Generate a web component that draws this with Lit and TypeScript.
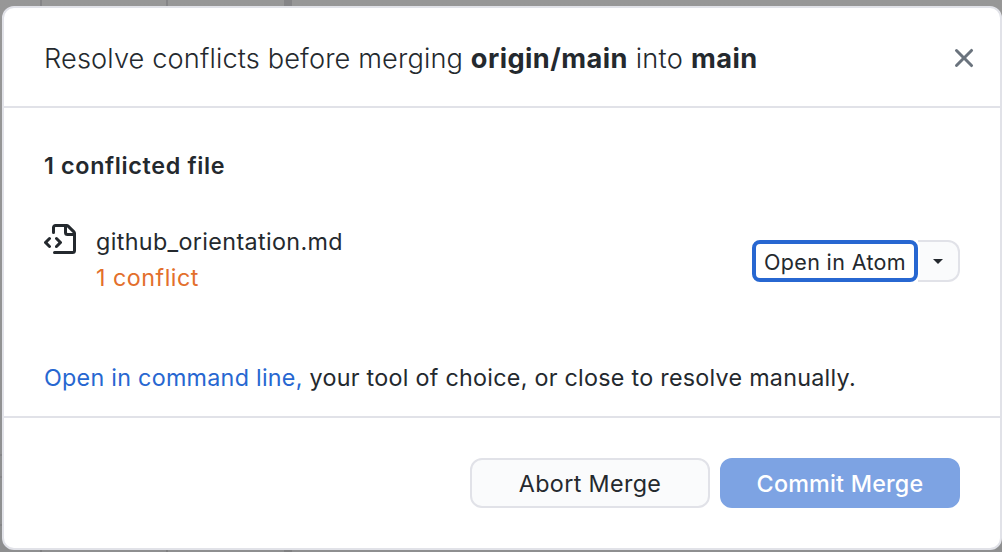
import { LitElement, html, css } from "lit";
import { customElement } from "lit/decorators.js";

@customElement("app-root")
export class AppRoot extends LitElement {
  static styles = css`
    :host {
      display: block;
      box-sizing: border-box;
      width: 1002px;
      height: 552px;
      padding: 6px 0 2px 2px;
      overflow: hidden;
      color: #24292e;
      font-family: Inter, "Liberation Sans", sans-serif;
      font-size: 23.3px;
      line-height: 36px;
      background:
        linear-gradient(#858587, #7f8081) 40px 0 / 2px 100% no-repeat,
        linear-gradient(#858587, #7f8081) 166px 0 / 2px 100% no-repeat,
        linear-gradient(#858587, #7f8081) 284px 0 / 8px 100% no-repeat,
        linear-gradient(#858587, #858587) 0 454px / 2px 2px no-repeat,
        linear-gradient(#858587, #858587) 0 476px / 2px 2px no-repeat,
        linear-gradient(#858587, #858587) 0 524px / 2px 2px no-repeat,
        linear-gradient(#979797, #8e8f90);
    }
    * { box-sizing: border-box; }
    .dialog {
      display: flex;
      flex-direction: column;
      width: 1000px;
      height: 544px;
      border: 2px solid #e1e2e8;
      border-radius: 12px;
      background: #fff;
      white-space: nowrap;
    }
    .header {
      display: flex;
      align-items: center;
      justify-content: space-between;
      height: 100px;
      padding: 2px 20px 0 40px;
      border-bottom: 2px solid #e1e2e8;
    }
    .title {
      margin: 0;
      padding-top: 1px;
      font-size: 27.2px;
      font-weight: 300;
      line-height: 40px;
      letter-spacing: 0.13px;
    }
    .title b { font-weight: 700; letter-spacing: 0.43px; }
    .title .joiner { letter-spacing: 0.27px; }
    .icon { display: block; fill: currentColor; }
    .close { color: #6a737d; }
    .body {
      height: 310px;
      padding: 40px;
      border-bottom: 2px solid #e1e2e8;
    }
    .count {
      margin: 0;
      font-size: 23.3px;
      font-weight: 600;
      letter-spacing: 0.67px;
    }
    .file {
      display: flex;
      align-items: flex-start;
      height: 72px;
      margin-top: 40px;
    }
    .file-icon { margin-right: 20px; }
    .details { flex: 1; }
    .name, .conflicts { height: 36px; }
    .name { letter-spacing: 0.36px; }
    .conflicts { color: #e36f2c; letter-spacing: 0.5px; }
    .open { display: flex; margin-top: 16px; }
    .open-main {
      display: flex;
      align-items: center;
      justify-content: center;
      width: 166px;
      height: 42px;
      padding-top: 2px;
      border: 4px solid #2767d1;
      border-radius: 8px;
      background: #fff;
      box-shadow: 0 0 0 2px #fff;
      font-size: 21.5px;
      letter-spacing: 0.36px;
      z-index: 1;
    }
    .open-more {
      display: flex;
      align-items: center;
      width: 42px;
      height: 42px;
      padding: 1px 0 0 15px;
      border: 2px solid #e1e2e8;
      border-left: 0;
      border-radius: 0 12px 12px 0;
      background: #fafbfc;
    }
    .hint { margin-top: 64px; letter-spacing: 0.27px; }
    .link { color: #2767d1; }
    .footer {
      display: flex;
      justify-content: flex-end;
      gap: 10px;
      padding: 40px 40px 0;
    }
    .button {
      display: flex;
      align-items: center;
      justify-content: center;
      width: 240px;
      height: 50px;
      padding-top: 2px;
      border: 2px solid #e1e2e8;
      border-radius: 12px;
      background: #fafbfc;
      letter-spacing: 0.36px;
    }
    .primary {
      border-color: #7da3e3;
      background: #7da3e3;
      color: #fff;
      font-weight: 500;
      letter-spacing: 0.22px;
    }
  `;

  render() {
    return html`
      <div class="dialog">
        <div class="header">
          <h1 class="title">Resolve conflicts before merging <b>origin/main</b><span class="joiner"> into </span><b>main</b></h1>
          <svg class="icon close" width="32" height="32" viewBox="0 0 16 16"><path d="M3.72 3.72a.75.75 0 0 1 1.06 0L8 6.94l3.22-3.22a.75.75 0 1 1 1.06 1.06L9.06 8l3.22 3.22a.75.75 0 1 1-1.06 1.06L8 9.06l-3.22 3.22a.75.75 0 0 1-1.06-1.06L6.94 8 3.72 4.78a.75.75 0 0 1 0-1.06Z"/></svg>
        </div>
        <div class="body">
          <h2 class="count">1 conflicted file</h2>
          <div class="file">
            <svg class="icon file-icon" width="32" height="32" viewBox="0 0 16 16"><path d="M4 1.75C4 .784 4.784 0 5.75 0h5.586c.464 0 .909.184 1.237.513l2.914 2.914c.329.328.513.773.513 1.237v8.586A1.75 1.75 0 0 1 14.25 15h-9a.75.75 0 0 1 0-1.5h9a.25.25 0 0 0 .25-.25V6h-2.75A1.75 1.75 0 0 1 10 4.25V1.5H5.75a.25.25 0 0 0-.25.25v2.5a.75.75 0 0 1-1.5 0Zm1.72 4.97a.75.75 0 0 1 1.06 0l2 2a.75.75 0 0 1 0 1.06l-2 2a.749.749 0 0 1-1.275-.326.749.749 0 0 1 .215-.734l1.47-1.47-1.47-1.47a.75.75 0 0 1 0-1.06ZM3.28 7.78 1.81 9.25l1.47 1.47a.751.751 0 0 1-.018 1.042.751.751 0 0 1-1.042.018l-2-2a.75.75 0 0 1 0-1.06l2-2a.751.751 0 0 1 1.042.018.751.751 0 0 1 .018 1.042Zm8.22-6.218V4.25c0 .138.112.25.25.25h2.688l-.011-.013-2.914-2.914-.013-.011Z"/></svg>
            <div class="details">
              <div class="name">github_orientation.md</div>
              <div class="conflicts">1 conflict</div>
            </div>
            <div class="open">
              <div class="open-main">Open in Atom</div>
              <div class="open-more"><svg class="icon" width="10" height="5" viewBox="0 0 10 5"><path d="M0 0h10L5 5z"/></svg></div>
            </div>
          </div>
          <div class="hint"><span class="link">Open in command line,</span> your tool of choice, or close to resolve manually.</div>
        </div>
        <div class="footer">
          <div class="button">Abort Merge</div>
          <div class="button primary">Commit Merge</div>
        </div>
      </div>
    `;
  }
}
